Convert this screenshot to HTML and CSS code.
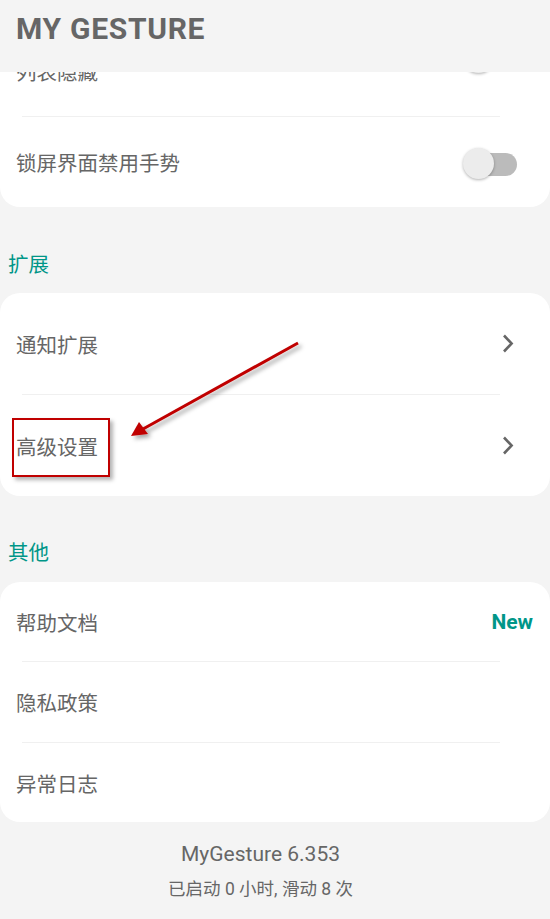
FILE: index.html
```html
<!DOCTYPE html>
<html lang="zh-CN">
<head>
    <meta charset="UTF-8">
    <meta name="viewport" content="width=device-width, initial-scale=1.0">
    <title>MyGesture</title>
    <link rel="stylesheet" href="styles.css">
</head>
<body>
    <header class="app-bar">
        <h1 class="app-title">MY GESTURE</h1>
    </header>

    <div class="viewport">
        <div class="content">
            <div class="card">
                <div class="row row-switch">
                    <span class="row-label">列表隐藏</span>
                    <span class="toggle toggle-first"><span class="toggle-track"></span><span class="toggle-thumb"></span></span>
                </div>
                <div class="divider"></div>
                <div class="row row-switch">
                    <span class="row-label">锁屏界面禁用手势</span>
                    <span class="toggle"><span class="toggle-track"></span><span class="toggle-thumb"></span></span>
                </div>
            </div>

            <h2 class="section-title">扩展</h2>
            <div class="card">
                <div class="row row-link">
                    <span class="row-label">通知扩展</span>
                    <svg class="chevron" width="12" height="19" viewBox="0 0 12 19"><path d="M2 1.5 L9.6 9.5 L2 17.5" fill="none" stroke="#666" stroke-width="2.6"/></svg>
                </div>
                <div class="divider"></div>
                <div class="row row-link">
                    <span class="row-label">高级设置</span>
                    <svg class="chevron" width="12" height="19" viewBox="0 0 12 19"><path d="M2 1.5 L9.6 9.5 L2 17.5" fill="none" stroke="#666" stroke-width="2.6"/></svg>
                </div>
            </div>

            <h2 class="section-title section-title-other">其他</h2>
            <div class="card">
                <div class="row row-plain">
                    <span class="row-label">帮助文档</span>
                    <span class="badge-new">New</span>
                </div>
                <div class="divider"></div>
                <div class="row row-plain row-mid">
                    <span class="row-label">隐私政策</span>
                </div>
                <div class="divider"></div>
                <div class="row row-plain">
                    <span class="row-label">异常日志</span>
                </div>
            </div>

            <footer class="footer">
                <div class="version">MyGesture 6.353</div>
                <div class="stats">已启动 0 小时, 滑动 8 次</div>
            </footer>
        </div>
    </div>

    <!-- screenshot annotation -->
    <div class="mark-box"></div>
    <svg class="mark-arrow" width="550" height="919" viewBox="0 0 550 919">
        <defs>
            <filter id="shade" x="-20%" y="-20%" width="140%" height="140%">
                <feDropShadow dx="3" dy="3" stdDeviation="2" flood-color="#000" flood-opacity="0.35"/>
            </filter>
        </defs>
        <g filter="url(#shade)">
            <line x1="298" y1="343" x2="143" y2="429" stroke="#c00000" stroke-width="3"/>
            <polygon points="131,436 139,422 148,434" fill="#c00000"/>
        </g>
    </svg>
</body>
</html>
```

FILE: styles.css
```css
body {
    margin: 0;
    width: 550px;
    height: 919px;
    overflow: hidden;
    background: #f4f4f4;
    color: #666;
    font-family: Roboto, "Noto Sans CJK SC", sans-serif;
    position: relative;
}
.app-bar {
    position: relative;
    z-index: 1;
    height: 72px;
    box-sizing: border-box;
    padding: 11px 16px 0;
    background: #f4f4f4;
}
.app-title {
    margin: 0;
    font-size: 30px;
    line-height: 35px;
    font-weight: bold;
    letter-spacing: 0.7px;
    color: #666;
}
.viewport {
    height: 847px;
}
.content {
    margin-top: -46px;
}
.card {
    background: #fff;
    border-radius: 20px;
}
.row {
    display: flex;
    align-items: center;
    justify-content: space-between;
    padding-left: 16px;
}
.row-label {
    font-family: "Noto Sans CJK SC", sans-serif;
    font-size: 20.5px;
    color: #666;
}
.row-switch {
    height: 90px;
    padding-right: 33px;
}
.row-link {
    height: 101px;
    padding-right: 36px;
}
.row-plain {
    height: 79px;
    padding-right: 17px;
}
.row-mid {
    height: 80px;
}
.divider {
    height: 1px;
    margin: 0 50px 0 22px;
    background: #f0f0f0;
}
.section-title {
    margin: 0;
    padding: 44px 8px 18px;
    font-family: "Noto Sans CJK SC", sans-serif;
    font-size: 20.5px;
    line-height: 24px;
    font-weight: normal;
    color: #009688;
}
.section-title-other {
    padding-top: 43px;
    padding-bottom: 19px;
}
.toggle {
    position: relative;
    width: 54px;
    height: 32px;
    margin-top: 3px;
}
.toggle-first {
    margin-top: -26px;
}
.toggle-track {
    position: absolute;
    right: 0;
    top: 5px;
    width: 48px;
    height: 23px;
    border-radius: 12px;
    background: #bbb;
}
.toggle-thumb {
    position: absolute;
    left: 0;
    top: 0;
    width: 31px;
    height: 31px;
    border-radius: 50%;
    background: #ececec;
    box-shadow: 0 1px 3px rgba(0, 0, 0, 0.3);
}
.chevron {
    display: block;
}
.badge-new {
    font-size: 21px;
    font-weight: bold;
    color: #009688;
}
.footer {
    padding: 19px 29px 0 0;
    text-align: center;
}
.version {
    font-size: 21px;
    line-height: 26px;
}
.stats {
    margin-top: 10px;
    font-size: 17.5px;
    line-height: 24px;
}
.mark-box {
    position: absolute;
    left: 12px;
    top: 418px;
    width: 94px;
    height: 55px;
    border: 2px solid #c00000;
    box-shadow: 3px 3px 4px rgba(0, 0, 0, 0.3);
}
.mark-arrow {
    position: absolute;
    left: 0;
    top: 0;
}
```
